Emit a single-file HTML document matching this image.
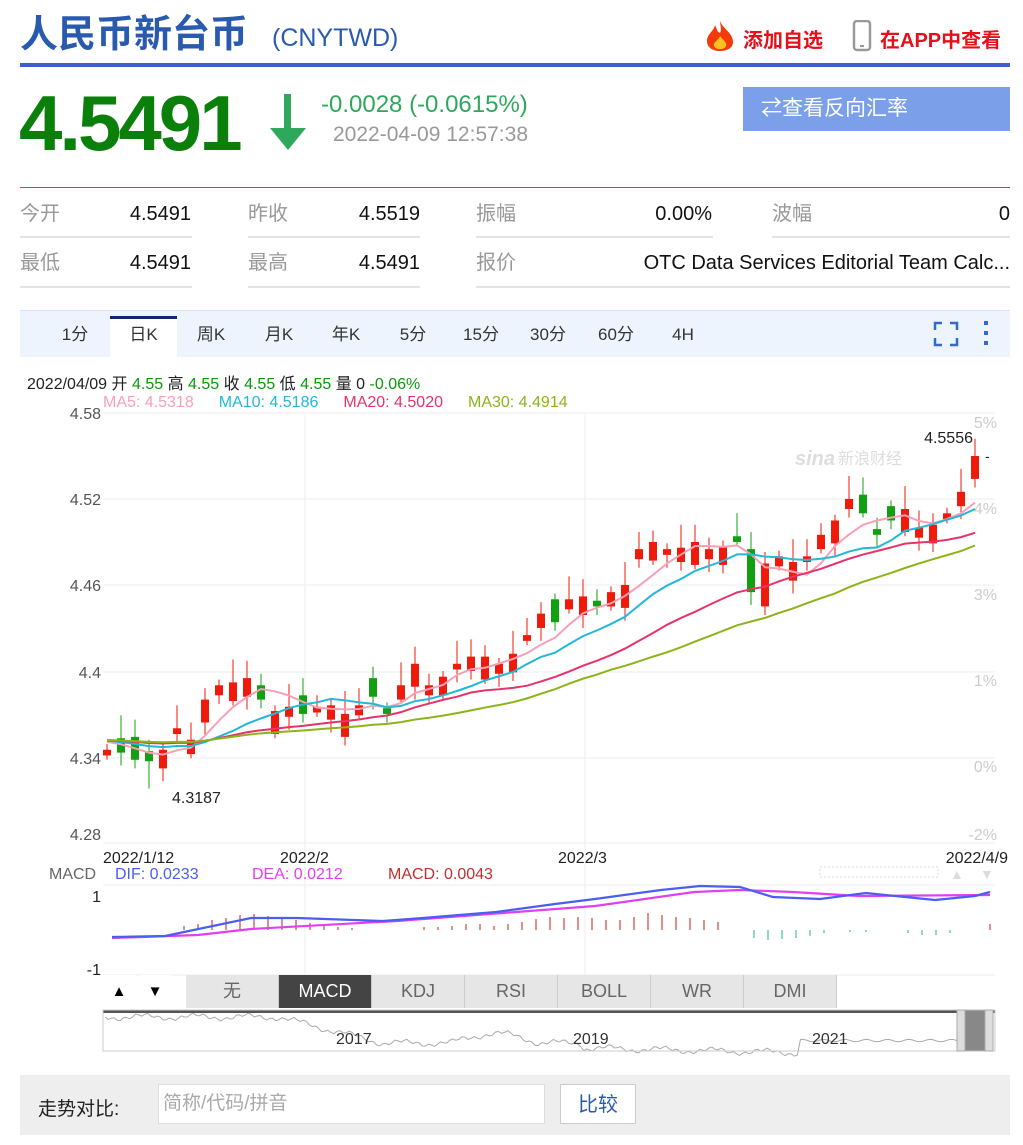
<!DOCTYPE html>
<html><head><meta charset="utf-8"><style>
*{margin:0;padding:0;box-sizing:border-box}
body{width:1023px;height:1144px;background:#fff;font-family:"Liberation Sans","Noto Sans CJK SC",sans-serif;position:relative;overflow:hidden;color:#333}
.a{position:absolute;white-space:nowrap}
.lbl{color:#999;font-size:20px;line-height:24px}
.val{color:#111;font-size:20px;line-height:24px;text-align:right}
.ul{position:absolute;height:2px;background:#e3e3e3}
.tab{position:absolute;top:310px;height:47px;line-height:50px;font-size:17px;color:#333;text-align:center}
.bt{position:absolute;top:975px;height:33px;line-height:33px;text-align:center;font-size:18px;color:#666;background:#e6e6e6;border-right:1px solid #ccc}
</style></head><body>
<div class="a" style="left:20px;top:10px;font-size:38px;line-height:50px;font-weight:bold;color:#2a5aae">人民币新台币</div>
<div class="a" style="left:272px;top:24px;font-size:25px;color:#2a5aae">(CNYTWD)</div>
<svg class="a" style="left:703px;top:20px" width="34" height="32" viewBox="0 0 34 32"><path d="M17 1 C20 9 30 13 30 22 C30 28 24 31 17 31 C9 31 4 27 4 21 C4 14 11 11 12 5 C14 9 14 12 17 13 C19 9 17 5 17 1Z" fill="#f23a0a"/><path d="M17 16 C20 20 24 22 23 26 C22 30 12 30 11 26 C10 22 15 21 17 16Z" fill="#ffc020"/></svg>
<div class="a" style="left:743px;top:24px;font-size:20px;font-weight:bold;color:#e5101a">添加自选</div>
<svg class="a" style="left:852px;top:20px" width="20" height="32"><rect x="2" y="1" width="16" height="29" rx="3" fill="none" stroke="#999" stroke-width="2.5"/><rect x="8" y="25" width="4" height="2" fill="#999"/></svg>
<div class="a" style="left:880px;top:24px;font-size:20px;font-weight:bold;color:#e5101a">在APP中查看</div>
<div class="a" style="left:20px;top:63px;width:990px;height:4px;background:#3a64c4"></div>

<div class="a" style="left:19px;top:78px;font-size:78px;line-height:90px;font-weight:bold;color:#0a800a;letter-spacing:-3px">4.5491</div>
<svg class="a" style="left:268px;top:92px" width="40" height="60"><rect x="16" y="2" width="7" height="38" fill="#2fa85d"/><path d="M2 36 L38 36 L20 58Z" fill="#2fa85d"/></svg>
<div class="a" style="left:321px;top:91px;font-size:24px;color:#2fa85d">-0.0028 (-0.0615%)</div>
<div class="a" style="left:333px;top:123px;font-size:21px;color:#999">2022-04-09 12:57:38</div>
<div class="a" style="left:743px;top:87px;width:267px;height:44px;background:#7b9fe8;color:#fff;font-size:21px;line-height:44px;padding-left:18px">⇄查看反向汇率</div>

<div class="a" style="left:20px;top:187px;width:990px;height:1px;background:#2a7ad8"></div>
<div class="a lbl" style="left:20px;top:202px">今开</div><div class="a val" style="left:100px;width:91px;top:202px">4.5491</div>
<div class="a lbl" style="left:248px;top:202px">昨收</div><div class="a val" style="left:320px;width:100px;top:202px">4.5519</div>
<div class="a lbl" style="left:476px;top:202px">振幅</div><div class="a val" style="left:560px;width:152px;top:202px">0.00%</div>
<div class="a lbl" style="left:772px;top:202px">波幅</div><div class="a val" style="left:900px;width:110px;top:202px">0</div>
<div class="ul" style="left:20px;width:172px;top:236px"></div><div class="ul" style="left:248px;width:172px;top:236px"></div><div class="ul" style="left:476px;width:237px;top:236px"></div><div class="ul" style="left:772px;width:238px;top:236px"></div>
<div class="a lbl" style="left:20px;top:251px">最低</div><div class="a val" style="left:100px;width:91px;top:251px">4.5491</div>
<div class="a lbl" style="left:248px;top:251px">最高</div><div class="a val" style="left:320px;width:100px;top:251px">4.5491</div>
<div class="a lbl" style="left:476px;top:251px">报价</div><div class="a val" style="left:560px;width:450px;top:251px">OTC Data Services Editorial Team Calc...</div>
<div class="ul" style="left:20px;width:172px;top:286px"></div><div class="ul" style="left:248px;width:172px;top:286px"></div><div class="ul" style="left:476px;width:534px;top:286px"></div>

<div class="a" style="left:20px;top:310px;width:990px;height:47px;background:#eef4fd;border-top:1px solid #dbe4f2"></div>
<div class="a" style="left:110px;top:316px;width:67px;height:41px;background:#fff;border-top:3px solid #0c2a70"></div>
<div class="tab" style="left:50px;width:50px">1分</div>
<div class="tab" style="left:110px;width:67px">日K</div>
<div class="tab" style="left:185px;width:52px">周K</div>
<div class="tab" style="left:253px;width:52px">月K</div>
<div class="tab" style="left:320px;width:52px">年K</div>
<div class="tab" style="left:388px;width:50px">5分</div>
<div class="tab" style="left:455px;width:52px">15分</div>
<div class="tab" style="left:522px;width:52px">30分</div>
<div class="tab" style="left:590px;width:52px">60分</div>
<div class="tab" style="left:660px;width:46px">4H</div>
<svg class="a" style="left:933px;top:321px" width="60" height="26"><path d="M2 9V2H9M17 2H24V9M24 17V24H17M9 24H2V17" fill="none" stroke="#2f6bd0" stroke-width="2.5"/><rect x="51" y="0" width="4" height="4" fill="#2f6bd0"/><rect x="51" y="10" width="4" height="4" fill="#2f6bd0"/><rect x="51" y="20" width="4" height="4" fill="#2f6bd0"/></svg>

<div class="a" style="left:27px;top:370px;font-size:16px;color:#222">2022/04/09 开 <span style="color:#0a9a0a">4.55</span> 高 <span style="color:#0a9a0a">4.55</span> 收 <span style="color:#0a9a0a">4.55</span> 低 <span style="color:#0a9a0a">4.55</span> 量 0 <span style="color:#0a9a0a">-0.06%</span></div>
<div class="a" style="left:103px;top:394px;font-size:16px"><span style="color:#f7a0b8">MA5: 4.5318</span><span style="color:#22b8d8;margin-left:25px">MA10: 4.5186</span><span style="color:#e8336a;margin-left:25px">MA20: 4.5020</span><span style="color:#8cb41a;margin-left:25px">MA30: 4.4914</span></div>

<svg id="ch" class="a" style="left:0;top:405px" width="1023" height="740"></svg>

<div class="a" style="left:20px;top:1075px;width:990px;height:60px;background:#eee"></div>
<div class="a" style="left:38px;top:1094px;font-size:19px;color:#222">走势对比:</div>
<div class="a" style="left:158px;top:1084px;width:387px;height:40px;background:#fff;border:1px solid #ddd;font-size:19px;color:#aaa;line-height:38px;padding-left:4px">简称/代码/拼音</div>
<div class="a" style="left:560px;top:1084px;width:76px;height:40px;background:#fff;border:1px solid #ccc;font-size:20px;color:#2a5aae;line-height:40px;text-align:center">比较</div>

<script>
var s=document.getElementById('ch'),o=405,h='';
function Y(p){return 413+(4.58-p)*1433-o}
[413,499,585,672,758,843].forEach(function(y){h+='<line x1="103" x2="995" y1="'+(y-o)+'" y2="'+(y-o)+'" stroke="#eee"/>'});
[305,585].forEach(function(x){h+='<line x1="'+x+'" x2="'+x+'" y1="8" y2="570" stroke="#eee"/>'});
var lab=[['4.58',413],['4.52',499],['4.46',585],['4.4',672],['4.34',758],['4.28',834]];
lab.forEach(function(l){h+='<text x="101" y="'+(l[1]-o+6)+'" text-anchor="end" font-size="16" fill="#555">'+l[0]+'</text>'});
[['5%',428],['4%',514],['3%',600],['1%',686],['0%',772],['-2%',840]].forEach(function(l){h+='<text x="997" y="'+(l[1]-o)+'" text-anchor="end" font-size="16" fill="#ccc">'+l[0]+'</text>'});
var c=[4.345,4.343,4.338,4.337,4.345,4.36,4.352,4.38,4.39,4.392,4.395,4.38,4.372,4.375,4.37,4.375,4.376,4.37,4.376,4.382,4.37,4.39,4.405,4.39,4.396,4.405,4.41,4.41,4.405,4.412,4.425,4.44,4.434,4.45,4.452,4.445,4.455,4.46,4.485,4.49,4.485,4.486,4.49,4.485,4.487,4.49,4.455,4.445,4.48,4.476,4.48,4.495,4.505,4.52,4.51,4.495,4.505,4.513,4.5,4.502,4.51,4.525,4.55];
var d=[1,-1,-1,-1,1,1,1,1,1,1,1,-1,1,1,-1,1,1,1,1,-1,-1,1,1,1,1,1,1,1,1,1,1,1,-1,1,1,-1,1,1,1,1,1,1,1,1,1,-1,-1,1,1,1,1,1,1,1,-1,-1,-1,1,1,1,1,1,1];
var n=c.length,x0=107,dx=(975-107)/(n-1);
for(var i=0;i<n;i++){var x=x0+i*dx,cl=c[i],op=cl-d[i]*(0.004+((i*7)%5)*0.003);if(i==46)op=4.485;if(i==47)op=4.475;if(i==10)op=4.382;
var hi=Math.max(op,cl)+0.004+((i*3)%4)*0.004,lo=Math.min(op,cl)-0.003-((i*5)%3)*0.003;if(i==3)lo=4.318;
var col=d[i]>0?'#f01a0a':'#10a010';h+='<line x1="'+x+'" x2="'+x+'" y1="'+Y(hi)+'" y2="'+Y(lo)+'" stroke="'+col+'"/>';
var t=Math.min(Y(op),Y(cl)),bh=Math.max(2,Math.abs(Y(op)-Y(cl)));h+='<rect x="'+(x-4)+'" y="'+t+'" width="8" height="'+bh+'" fill="'+col+'"/>';}
var hist=[];for(var k=0;k<30;k++)hist.push(4.352);var all=hist.concat(c);
function ma(k,col){var p='';for(var i=0;i<n;i++){var m=0;for(var j=30+i-k+1;j<=30+i;j++)m+=all[j];m=m/k;p+=(x0+i*dx)+','+Y(m)+' ';}h+='<polyline points="'+p+'" fill="none" stroke="'+col+'" stroke-width="2"/>';}
ma(5,'#f7a0b8');ma(10,'#22b8d8');ma(20,'#e8336a');ma(30,'#8cb41a');
h+='<text x="973" y="38" text-anchor="end" font-size="16" fill="#222">4.5556</text><text x="172" y="398" font-size="16" fill="#222">4.3187</text><text x="985" y="56" font-size="14" fill="#222">-</text>';
h+='<text x="795" y="60" font-size="20" font-weight="bold" font-style="italic" fill="#ddd">sina</text><text x="838" y="59" font-size="16" fill="#ddd">新浪财经</text>';
h+='<text x="103" y="458" font-size="16" fill="#222">2022/1/12</text><text x="280" y="458" font-size="16" fill="#222">2022/2</text><text x="558" y="458" font-size="16" fill="#222">2022/3</text><text x="1008" y="458" text-anchor="end" font-size="16" fill="#222">2022/4/9</text>';
h+='<text x="49" y="474" font-size="16" fill="#666">MACD</text><text x="115" y="474" font-size="16" fill="#4a5ef0">DIF: 0.0233</text><text x="252" y="474" font-size="16" fill="#e040f0">DEA: 0.0212</text><text x="388" y="474" font-size="16" fill="#c03030">MACD: 0.0043</text>';
h+='<rect x="820" y="462" width="118" height="10" fill="none" stroke="#ddd" stroke-dasharray="2 2"/><text x="950" y="474" font-size="14" fill="#ddd">▲</text><text x="980" y="474" font-size="14" fill="#ddd">▼</text>';
[480,570].forEach(function(y){h+='<line x1="103" x2="995" y1="'+y+'" y2="'+y+'" stroke="#eee"/>'});
h+='<text x="101" y="497" text-anchor="end" font-size="16" fill="#222">1</text><text x="101" y="570" text-anchor="end" font-size="16" fill="#222">-1</text>';
var z=930-o;
var bars=[[184,4],[198,6],[212,10],[226,12],[240,15],[254,16],[268,14],[282,12],[296,10],[310,7],[324,5],[338,3],[352,2],[424,3],[438,3],[452,4],[466,6],[480,6],[494,4],[508,6],[522,8],[536,11],[550,13],[564,12],[578,13],[592,12],[606,10],[620,10],[634,13],[648,17],[662,15],[676,13],[690,12],[704,10],[718,8]];
bars.forEach(function(b){h+='<line x1="'+b[0]+'" x2="'+b[0]+'" y1="'+z+'" y2="'+(z-b[1])+'" stroke="#c02010"/>'});
[[754,8],[768,10],[782,9],[796,8],[810,6],[824,3],[850,2],[866,2],[908,3],[922,5],[936,5],[950,3]].forEach(function(b){h+='<line x1="'+b[0]+'" x2="'+b[0]+'" y1="'+z+'" y2="'+(z+b[1])+'" stroke="#20b090"/>'});
h+='<line x1="990" x2="990" y1="'+z+'" y2="'+(z-6)+'" stroke="#c02010"/>';
h+='<g transform="translate(0,-405)"><polyline points="112,938 198,935 251,929 397,921 595,906 694,892 740,890 793,892 859,896 990,895" fill="none" stroke="#e040f0" stroke-width="2.2"/>';
h+='<polyline points="112,937 165,936 251,918 297,918 383,921 423,918 496,912 555,904 595,899 661,890 700,886 740,887 773,897 820,899 866,893 935,900 975,896 990,892" fill="none" stroke="#4a5ef0" stroke-width="2.2"/></g>';
var p='';for(var i=0;i<=284;i++){var x=105+i*3.05,y;var t=i/284;y=(t<0.2?0:t<0.32?(t-0.2)*350:42)+(t>0.4&&t<0.5?-15*Math.sin((t-0.4)*31):0)+(t>0.55?8+(t-0.55)*30:0)+Math.sin(i*1.7)*2.5+Math.sin(i*0.37)*4;if(t>0.8)y=38+Math.sin(i*0.9)*2;p+=x+','+(1017-o+y*0.62)+' ';}
h+='<polyline points="'+p+'" fill="none" stroke="#aaa" stroke-width="1"/>';
h+='<rect x="103" y="'+(1010-o)+'" width="892" height="3" fill="#555"/><rect x="103" y="'+(1010-o)+'" width="892" height="41" fill="none" stroke="#ccc"/>';
h+='<text x="336" y="'+(1044-o)+'" font-size="16" fill="#333">2017</text><text x="573" y="'+(1044-o)+'" font-size="16" fill="#333">2019</text><text x="812" y="'+(1044-o)+'" font-size="16" fill="#333">2021</text>';
h+='<rect x="957" y="'+(1010-o)+'" width="36" height="41" fill="#888" stroke="#bbb"/><rect x="957" y="'+(1010-o)+'" width="8" height="41" fill="#ddd" stroke="#aaa"/><rect x="985" y="'+(1010-o)+'" width="8" height="41" fill="#ddd" stroke="#aaa"/>';
s.innerHTML=h;
</script>
<div class="a" style="left:103px;top:975px;width:32px;height:33px;background:#fff;text-align:center;line-height:33px;font-size:15px;color:#000">▲</div>
<div class="a" style="left:139px;top:975px;width:32px;height:33px;background:#fff;text-align:center;line-height:33px;font-size:15px;color:#000">▼</div>
<div class="bt" style="left:186px;width:93px">无</div>
<div class="bt" style="left:279px;width:93px;background:#444;color:#fff">MACD</div>
<div class="bt" style="left:372px;width:93px">KDJ</div>
<div class="bt" style="left:465px;width:93px">RSI</div>
<div class="bt" style="left:558px;width:93px">BOLL</div>
<div class="bt" style="left:651px;width:93px">WR</div>
<div class="bt" style="left:744px;width:93px">DMI</div>
</body></html>
